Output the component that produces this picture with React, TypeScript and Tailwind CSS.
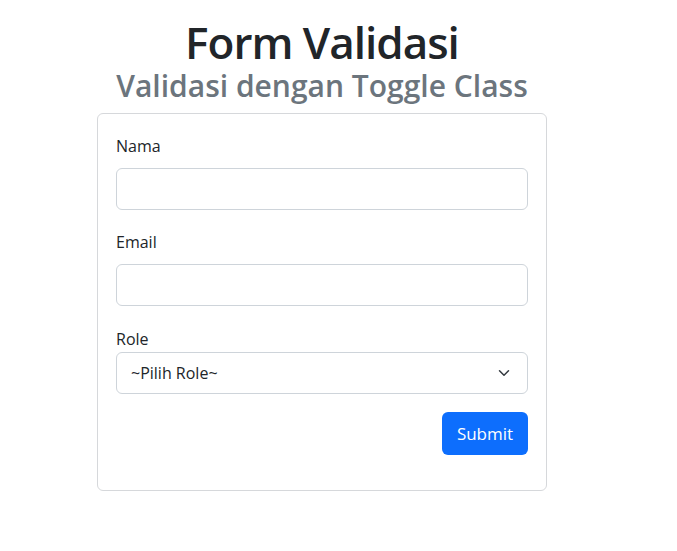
import React, { useState } from 'react'

export default function App() {
  const [nama, setNama] = useState("")
  const [email, setEmail] = useState("")
  const [role, setRole] = useState("")

  return (
    <div className="min-h-screen bg-white text-[#212529]" style={{ fontFamily: '"Open Sans", "Noto Sans", sans-serif' }}>
      <div className="ml-[97px] w-[450px] pt-[17px]">
        <h1 className="text-center text-[44px] font-semibold leading-[50px] tracking-[-1px]">Form Validasi</h1>
        <h3 className="text-center text-[30px] font-semibold leading-[34px] text-[#6c757d] mt-[2px]">Validasi dengan Toggle Class</h3>
        <div className="mt-[10px] rounded-[6px] border border-[#d6d8db] px-[18px] pt-[20px] pb-[35px]">
          <label className="block text-[16px] leading-[24px] mb-[10px]">Nama</label>
          <input
            className="block w-full h-[42px] rounded-[6px] border border-[#ced4da] px-3 text-[16px] outline-none"
            type="text"
            value={nama}
            onChange={(e) => setNama(e.target.value)}
          />
          <label className="block text-[16px] leading-[24px] mt-[20px] mb-[10px]">Email</label>
          <input
            className="block w-full h-[42px] rounded-[6px] border border-[#ced4da] px-3 text-[16px] outline-none"
            type="email"
            value={email}
            onChange={(e) => setEmail(e.target.value)}
          />
          <label className="block text-[16px] leading-[24px] mt-[21px] mb-[1px]">Role</label>
          <div className="relative">
            <select
              className="block w-full h-[42px] appearance-none rounded-[6px] border border-[#ced4da] bg-white pl-[14px] pr-10 text-[16px] text-[#212529] outline-none"
              value={role}
              onChange={(e) => setRole(e.target.value)}
            >
              <option value="">~Pilih Role~</option>
              <option value="admin">Admin</option>
              <option value="user">User</option>
            </select>
            <svg className="pointer-events-none absolute right-[17px] top-[15px]" width="14" height="12" viewBox="0 0 16 16" fill="none">
              <path d="M2 5l6 6 6-6" stroke="#343a40" strokeWidth="2" strokeLinecap="round" strokeLinejoin="round" />
            </svg>
          </div>
          <div className="flex justify-end mt-[18px]">
            <button className="h-[43px] w-[86px] rounded-[6px] bg-[#0d6efd] text-[17px] text-white">Submit</button>
          </div>
        </div>
      </div>
    </div>
  )
}
